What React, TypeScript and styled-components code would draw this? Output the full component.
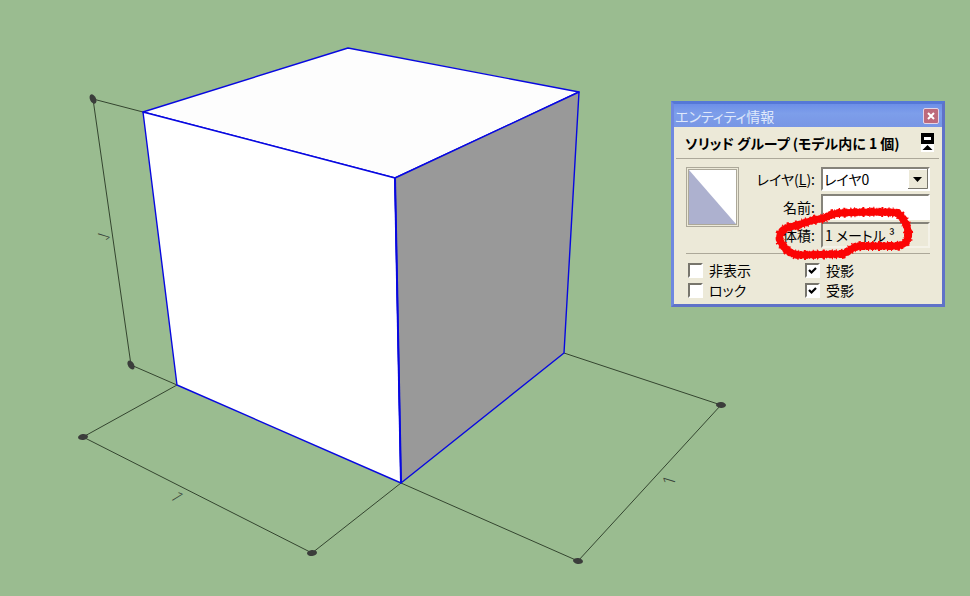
import React, { useState } from "react";
import styled, { createGlobalStyle } from "styled-components";

const PageStyle = createGlobalStyle`
  * { box-sizing: border-box; }
  body { margin: 0; background: #9abc90; }
`;

const Viewport = styled.main`
  position: relative;
  min-height: 100vh;
  overflow: hidden;
  background: #9abc90;
  color: #000;
  font-family: "Noto Sans CJK JP", "Liberation Sans", sans-serif;
  font-feature-settings: "palt";
  font-size: 14px;
  line-height: 20px;
`;

const Scene = styled.svg`
  display: block;
  width: 100%;
  height: auto;
`;

const DimensionText = styled.text`
  fill: #39443a;
  font-family: "Open Sans", sans-serif;
  font-size: 17px;
  font-weight: 300;
`;

const Palette = styled.section`
  position: absolute;
  left: 671px;
  top: 101px;
  width: 274px;
  border: 3px solid;
  border-color: #5578d8 #5f72c8 #5f72c8 #6f88e0;
  background: #ece9d8;
`;

const TitleBar = styled.header`
  display: flex;
  align-items: center;
  justify-content: space-between;
  height: 23px;
  padding: 0 3px 0 1px;
  background: linear-gradient(#6d8fe8, #7d9eea 40%, #7896e5);
  color: #dfe8fb;
`;

const CloseButton = styled.button`
  display: grid;
  place-items: center;
  width: 16px;
  height: 16px;
  padding: 0;
  border: 1px solid #e4d5e6;
  border-radius: 2px;
  background: #bd6a7c;
`;

const Heading = styled.div`
  display: flex;
  align-items: center;
  justify-content: space-between;
  height: 32px;
  margin: 0 3px 0 2px;
  padding: 0 5px 0 9px;
  border-bottom: 1px solid #aca899;
`;

const HeadingText = styled.h2`
  margin: 0;
  font-size: 14px;
  font-weight: 700;
  line-height: 20px;
`;

const DetailsButton = styled.button`
  width: 13px;
  height: 19px;
  padding: 0;
  border: 0;
  background: #fff;

  svg { display: block; }
`;

const Body = styled.div`
  padding: 8px 12px 4px;
`;

const Properties = styled.div`
  display: flex;
  justify-content: space-between;
  height: 87px;
  border-bottom: 1px solid #aca899;
`;

const Swatch = styled.svg`
  display: block;
  width: 53px;
  height: 60px;
`;

const Fields = styled.div`
  display: grid;
  grid-template-columns: auto 109px;
  grid-template-rows: 24px 27px 26px;
  row-gap: 2px;
  column-gap: 6px;
  align-content: start;
  align-items: center;
  justify-items: end;
`;

const FieldLabel = styled.label`
  white-space: nowrap;
`;

const SelectFrame = styled.div`
  display: grid;
  width: 100%;
  height: 24px;
  border: 2px solid;
  border-color: #85837a #fff #fff #85837a;
  background: #fff;

  > * { grid-area: 1 / 1; }
`;

const Select = styled.select`
  width: 100%;
  height: 20px;
  padding: 0 20px 0 1px;
  border: 0;
  border-radius: 0;
  appearance: none;
  background: transparent;
  color: inherit;
  font: inherit;
  font-feature-settings: inherit;
`;

const Arrow = styled.svg`
  justify-self: end;
  width: 20px;
  height: 20px;
  pointer-events: none;
`;

const TextBox = styled.input<{ $flat?: boolean }>`
  width: 100%;
  height: 26px;
  padding: 0 2px;
  border: 2px solid;
  border-color: ${(p) => (p.$flat ? "#85837a #f4f2e8 #f4f2e8 #85837a" : "#85837a #fff #fff #85837a")};
  background: ${(p) => (p.$flat ? "#ece9d8" : "#fff")};
  color: inherit;
  font: inherit;
  font-feature-settings: inherit;
`;

const Options = styled.div`
  display: grid;
  grid-template-columns: 117px 1fr;
  padding: 6px 2px 0;
`;

const Option = styled.label`
  display: flex;
  align-items: center;
  gap: 6px;
  height: 20px;
`;

const CheckFrame = styled.span`
  display: grid;
  width: 15px;
  height: 15px;

  > * { grid-area: 1 / 1; }
`;

const CheckInput = styled.input`
  width: 15px;
  height: 15px;
  margin: 0;
  appearance: none;
  border: 2px solid;
  border-color: #77756c #fff #fff #77756c;
  background: #fff;

  &:not(:checked) + svg { visibility: hidden; }
`;

const Tick = styled.svg`
  width: 15px;
  height: 15px;
  pointer-events: none;
`;

const RedMark = styled.svg`
  position: absolute;
  left: 98px;
  top: 100px;
  width: 144px;
  height: 60px;
  fill: none;
  stroke: #fb0505;
  stroke-linejoin: round;
  pointer-events: none;
`;

const markPath =
  "M840 213C830 213 828 218 820 219C808 220 800 226 789 227C780 230 777 238 782 244C787 252 793 255 801 255L842 254C850 252 851 246 862 246H895C903 246 908 242 908 236C909 226 904 219 898 213C880 211 862 212 838 213";

const dots = [
  { x: 93, y: 99, rx: 5, ry: 3, turn: 65 },
  { x: 131, y: 365, rx: 5, ry: 3, turn: 60 },
  { x: 83, y: 437, rx: 5, ry: 3, turn: -8 },
  { x: 312, y: 553, rx: 5, ry: 3, turn: -5 },
  { x: 578, y: 561, rx: 5, ry: 3, turn: 8 },
  { x: 721, y: 405, rx: 5, ry: 3, turn: 4 },
];

function Model() {
  return (
    <Scene viewBox="0 0 970 596" role="img" aria-label="1">
      <g fill="none" stroke="#34452f" strokeWidth="1">
        <path d="M143 112 93 99 131 365 177 385 83 437 312 553 401 483" />
        <path d="M401 483 578 561 721 405 564 353" />
      </g>
      <g stroke="#0808e0" strokeWidth="1.4" strokeLinejoin="round">
        <path fill="#fdfdfd" d="M143 112 348 48 579 92 395 178Z" />
        <path fill="#fff" d="M143 112 395 178 401 483 177 385Z" />
        <path fill="#999" d="M395 178 579 92 564 353 401 483Z" />
      </g>
      <path stroke="#0808e0" strokeWidth="2" d="M395 178 401 483" />
      {dots.map((d) => (
        <ellipse key={`${d.x}-${d.y}`} rx={d.rx} ry={d.ry} fill="#3b3d3b"
          transform={`translate(${d.x} ${d.y}) rotate(${d.turn})`} />
      ))}
      <DimensionText transform="translate(98 234) rotate(107) scale(-1 1)" textAnchor="middle">1</DimensionText>
      <DimensionText transform="translate(172 500) rotate(58)" textAnchor="middle">1</DimensionText>
      <DimensionText transform="translate(675 482) rotate(-73)" textAnchor="middle">1</DimensionText>
    </Scene>
  );
}

function Check({ label, initial = false }: { label: string; initial?: boolean }) {
  const [on, setOn] = useState(initial);
  return (
    <Option>
      <CheckFrame>
        <CheckInput type="checkbox" checked={on} onChange={() => setOn(!on)} />
        <Tick viewBox="0 0 15 15"><path d="M4 7l2.5 2.5L11 5" fill="none" stroke="#000" strokeWidth="2.2" /></Tick>
      </CheckFrame>
      {label}
    </Option>
  );
}

export default function App() {
  return (
    <Viewport>
      <PageStyle />
      <Model />
      <Palette>
        <TitleBar>
          <span>エンティティ情報</span>
          <CloseButton aria-label="閉じる">
            <svg width="8" height="8" viewBox="0 0 8 8"><path d="M1 1l6 6M7 1L1 7" stroke="#fff" strokeWidth="2" /></svg>
          </CloseButton>
        </TitleBar>
        <Heading>
          <HeadingText>ソリッド グループ (モデル内に 1 個)</HeadingText>
          <DetailsButton aria-label="詳細">
            <svg width="13" height="19" viewBox="0 0 13 19">
              <path d="M0 0h13v11H0z" />
              <path d="M3 4h7v3H3z" fill="#fff" />
              <path d="M6.500 12l5 5h-10z" />
            </svg>
          </DetailsButton>
        </Heading>
        <Body>
          <Properties>
            <Swatch viewBox="0 0 53 60">
              <path fill="#aca899" d="M0 0h53v60H0z" />
              <path fill="#ece9d8" d="M1 1h51v58H1z" />
              <path fill="#aca899" d="M2 2h49v56H2z" />
              <path fill="#fff" d="M3 3h47v54H3z" />
              <path fill="#adb1cf" d="M3 3 50 57H3z" />
            </Swatch>
            <Fields>
              <FieldLabel htmlFor="layer">レイヤ(<u>L</u>):</FieldLabel>
              <SelectFrame>
                <Select id="layer"><option>レイヤ0</option></Select>
                <Arrow viewBox="0 0 20 20">
                  <path d="M0 0h20v20H0z" fill="#ece9d8" />
                  <path d="M.5 20V.5H20" fill="none" stroke="#fff" />
                  <path d="M0 19.500h19.500V0" fill="none" stroke="#77756c" />
                  <path d="M5 8h9l-4.500 5z" />
                </Arrow>
              </SelectFrame>
              <FieldLabel htmlFor="name">名前:</FieldLabel>
              <TextBox id="name" />
              <FieldLabel htmlFor="volume">体積:</FieldLabel>
              <TextBox id="volume" $flat readOnly value="1 メートル ³" />
            </Fields>
          </Properties>
          <Options>
            <Check label="非表示" />
            <Check label="投影" initial />
            <Check label="ロック" />
            <Check label="受影" initial />
          </Options>
        </Body>
        <RedMark viewBox="772 204 144 60">
          <path d={markPath} strokeWidth="7" />
          <path d={markPath} strokeWidth="8" strokeDasharray="3 1 1 2 4 1 2 3" />
          <path d={markPath} strokeWidth="10" strokeDasharray="1 5 2 7 1 3" />
        </RedMark>
      </Palette>
    </Viewport>
  );
}
